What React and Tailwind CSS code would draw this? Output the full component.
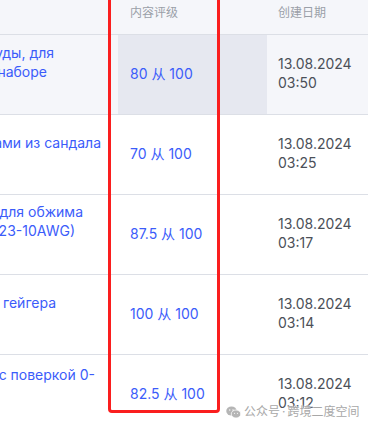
import React from "react";

const rows = [
  {
    left: [
      { t: "посуды, для", pr: "pr-[64px]" },
      { t: "в наборе", pr: "pr-[71px]" },
    ],
    lpt: "pt-[8px]",
    rating: "80 从 100",
    date: "13.08.2024",
    time: "03:50",
    hover: true,
  },
  {
    left: [{ t: "ручками из сандала", pr: "pr-[17px]" }],
    lpt: "pt-[18px]",
    rating: "70 从 100",
    date: "13.08.2024",
    time: "03:25",
  },
  {
    left: [
      { t: "Клещи для обжима", pr: "pr-[35px]" },
      { t: "(23-10AWG)", pr: "pr-[43px]" },
    ],
    lpt: "pt-[7px]",
    rating: "87.5 从 100",
    date: "13.08.2024",
    time: "03:17",
  },
  {
    left: [{ t: "счетчика гейгера", pr: "pr-[62px]" }],
    lpt: "pt-[18px]",
    rating: "100 从 100",
    date: "13.08.2024",
    time: "03:14",
  },
  {
    left: [{ t: "с поверкой 0-", pr: "pr-[23px]" }],
    lpt: "pt-[10px]",
    rating: "82.5 从 100",
    date: "13.08.2024",
    time: "03:12",
  },
];

export default function App() {
  return (
    <div
      className="relative w-[368px] h-[428px] overflow-hidden bg-white"
      style={{ fontFamily: "Inter, 'Noto Sans CJK SC', sans-serif" }}
    >
      {/* header */}
      <div className="flex h-[35px] bg-[#f5f6fa] border-b border-[#dcdfe6]">
        <div className="w-[118px] shrink-0" />
        <div className="w-[149px] shrink-0 pl-[12px] pt-[5px] text-[12px] leading-[16px] text-[#9a9fa8]">
          内容评级
        </div>
        <div className="flex-1 pl-[11px] pt-[5px] text-[12px] leading-[16px] text-[#9a9fa8]">
          创建日期
        </div>
      </div>

      {rows.map((r, i) => (
        <div
          key={i}
          className={`flex h-[80px] border-b border-[#dcdfe6] ${
            r.hover ? "bg-[#f5f6fa]" : "bg-white"
          }`}
        >
          <div
            className={`w-[118px] shrink-0 overflow-hidden ${r.lpt} text-[14px] leading-[19px] text-[#3b5cfa]`}
          >
            {r.left.map((l, j) => (
              <div key={j} className={`flex justify-end whitespace-nowrap ${l.pr}`}>
                <span className="shrink-0">{l.t}</span>
              </div>
            ))}
          </div>
          <div
            className={`w-[149px] shrink-0 flex items-center pl-[12px] pb-[3px] text-[14px] leading-[19px] text-[#3b5cfa] ${
              r.hover ? "bg-[#e6e8f0]" : ""
            }`}
          >
            {r.rating}
          </div>
          <div className="flex-1 flex flex-col justify-center pl-[11px] pb-[4px] text-[14px] leading-[19px] text-[#4b5058]">
            <div>{r.date}</div>
            <div>{r.time}</div>
          </div>
        </div>
      ))}

      {/* red highlight box */}
      <div className="absolute left-[108px] top-[-10px] w-[112px] h-[423px] border-[3px] border-[#fa1e1e] rounded-[4px]" />

      {/* watermark */}
      <div className="absolute left-[226px] top-[404px] flex items-center gap-[3px] whitespace-nowrap text-[12px] leading-[16px] text-[#a8a8a8]">
        <svg width="15" height="13" viewBox="0 0 30 26">
          <ellipse cx="11" cy="10" rx="10.5" ry="9" fill="#b5b5b5" />
          <ellipse cx="20" cy="16" rx="9.5" ry="8" fill="#b5b5b5" stroke="#fff" strokeWidth="1.5" />
          <circle cx="7.5" cy="8" r="1.4" fill="#fff" />
          <circle cx="14" cy="8" r="1.4" fill="#fff" />
          <circle cx="17" cy="14.5" r="1.2" fill="#fff" />
          <circle cx="23" cy="14.5" r="1.2" fill="#fff" />
        </svg>
        <span className="flex items-center" style={{ textShadow: "0 0 2px #fff, 0 0 2px #fff" }}>
          <span>公众号</span>
          <span className="mx-[2px]">·</span>
          <span>跨境二度空间</span>
        </span>
      </div>
    </div>
  );
}
